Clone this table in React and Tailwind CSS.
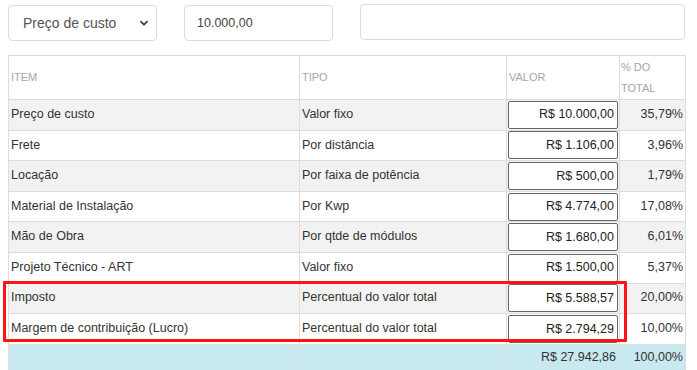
import React from 'react';

const rows = [
  { item: 'Preço de custo', tipo: 'Valor fixo', valor: 'R$ 10.000,00', pct: '35,79%' },
  { item: 'Frete', tipo: 'Por distância', valor: 'R$ 1.106,00', pct: '3,96%' },
  { item: 'Locação', tipo: 'Por faixa de potência', valor: 'R$ 500,00', pct: '1,79%' },
  { item: 'Material de Instalação', tipo: 'Por Kwp', valor: 'R$ 4.774,00', pct: '17,08%' },
  { item: 'Mão de Obra', tipo: 'Por qtde de módulos', valor: 'R$ 1.680,00', pct: '6,01%' },
  { item: 'Projeto Técnico - ART', tipo: 'Valor fixo', valor: 'R$ 1.500,00', pct: '5,37%' },
  { item: 'Imposto', tipo: 'Percentual do valor total', valor: 'R$ 5.588,57', pct: '20,00%' },
  { item: 'Margem de contribuição (Lucro)', tipo: 'Percentual do valor total', valor: 'R$ 2.794,29', pct: '10,00%' },
];

const App = () => {
  return (
    <div className="w-[697px] h-[370px] overflow-hidden bg-white font-['Liberation_Sans',Arial,sans-serif] text-[12.5px] text-[#333]">
      {/* Filters */}
      <div className="flex items-start pl-2 pt-[5px] gap-[27px]">
        <div className="w-[149px] h-[36px] border border-[#ddd] rounded flex items-center justify-between pl-[14px] pr-[7px] text-[14px] text-[#555]">
          <span>Preço de custo</span>
          <svg width="10" height="10" viewBox="0 0 10 10">
            <path d="M1.5 3.2 L5 6.7 L8.5 3.2" fill="none" stroke="#444" strokeWidth="1.8" />
          </svg>
        </div>
        <div className="w-[149px] h-[36px] border border-[#ddd] rounded flex items-center pl-[12px] text-[12.5px] text-[#444]">
          10.000,00
        </div>
        <div className="w-[325px] h-[36px] -mt-px border border-[#ddd] rounded" />
      </div>

      {/* Cost table */}
      <div className="relative ml-2 mt-[14px] w-[677px]">
        <table className="w-full border-collapse table-fixed">
          <colgroup>
            <col className="w-[291px]" />
            <col className="w-[207px]" />
            <col className="w-[113px]" />
            <col className="w-[66px]" />
          </colgroup>
          <thead>
            <tr className="h-[44px] text-[11px] uppercase text-[#a6a6a6] text-left">
              <th className="font-normal border border-[#ddd] px-[2px] leading-[21px]">Item</th>
              <th className="font-normal border border-[#ddd] px-[2px] leading-[21px]">Tipo</th>
              <th className="font-normal border border-[#ddd] px-[2px] leading-[21px]">Valor</th>
              <th className="font-normal border border-[#ddd] px-[1px] leading-[21px]">% do total</th>
            </tr>
          </thead>
          <tbody>
            {rows.map((r, i) => (
              <tr key={r.item} className={`h-[30.6px] ${i % 2 === 0 ? 'bg-[#f2f2f2]' : 'bg-white'}`}>
                <td className="border border-[#ddd] px-[2px] py-0 pb-px">{r.item}</td>
                <td className="border border-[#ddd] px-[2px] py-0 pb-px">{r.tipo}</td>
                <td className="border border-[#ddd] px-[1px] py-0">
                  <div className="h-[28px] bg-white border border-[#666] rounded-[2px] flex items-center justify-end pr-[3px] text-[#222]">
                    {r.valor}
                  </div>
                </td>
                <td className="border border-[#ddd] px-[2px] py-0 pb-px text-right">{r.pct}</td>
              </tr>
            ))}
            <tr className="h-[30px] bg-[#c8e9f0]">
              <td className="border border-[#ddd] border-b-0" />
              <td className="border border-[#ddd] border-b-0" />
              <td className="border border-[#ddd] border-b-0 px-[3px] pb-[5px] text-right">R$ 27.942,86</td>
              <td className="border border-[#ddd] border-b-0 px-[2px] pb-[5px] text-right">100,00%</td>
            </tr>
          </tbody>
        </table>
        {/* highlight around the percentual rows */}
        <div className="absolute left-[-5px] top-[226px] w-[624px] h-[61px] border-[3px] border-[#ff1414] rounded-[1px] pointer-events-none" />
      </div>
    </div>
  );
};

export default App;
